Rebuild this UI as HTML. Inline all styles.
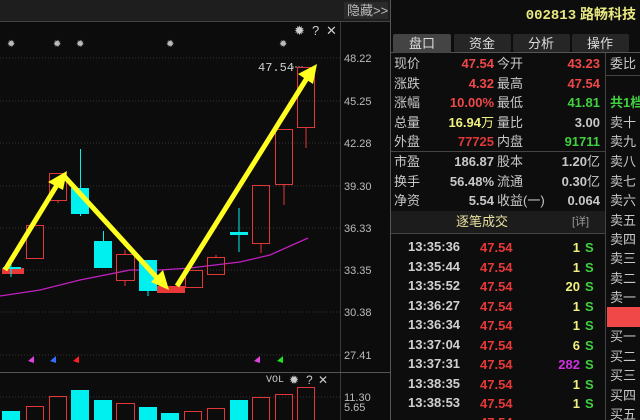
<!DOCTYPE html>
<html><head><meta charset="utf-8"><style>
html,body{margin:0;padding:0;background:#0c0c0c;width:640px;height:420px;overflow:hidden}
svg{display:block}
text{font-family:"Liberation Sans","Noto Sans CJK SC",sans-serif}
.m{font-family:"Liberation Mono","Noto Sans CJK SC",monospace}
</style></head><body>
<svg width="640" height="420" viewBox="0 0 640 420" xmlns="http://www.w3.org/2000/svg">
<rect width="640" height="420" fill="#0c0c0c"/>
<rect x="0" y="0" width="390" height="21" fill="#1e1e1e"/>
<line x1="0" y1="21.5" x2="390" y2="21.5" stroke="#444"/>
<rect x="344" y="2" width="44" height="17" fill="#2a2a2a"/>
<text x="347" y="15" font-size="13" fill="#bbb">隐藏&gt;&gt;</text>
<line x1="340.5" y1="22" x2="340.5" y2="420" stroke="#3a3a3a"/>
<line x1="390.5" y1="0" x2="390.5" y2="420" stroke="#555"/>
<line x1="0" y1="372.5" x2="390" y2="372.5" stroke="#555"/>
<g stroke="#333" stroke-dasharray="1,2">
<line x1="0" y1="58" x2="340" y2="58"/><line x1="0" y1="101" x2="340" y2="101"/>
<line x1="0" y1="143" x2="340" y2="143"/><line x1="0" y1="186" x2="340" y2="186"/>
<line x1="0" y1="228" x2="340" y2="228"/><line x1="0" y1="270" x2="340" y2="270"/>
<line x1="0" y1="312" x2="340" y2="312"/><line x1="0" y1="355" x2="340" y2="355"/>
<line x1="0" y1="397" x2="340" y2="397"/>
</g>
<g class="m" font-size="11" fill="#bbb">
<text x="344" y="62">48.22</text><text x="344" y="105">45.25</text>
<text x="344" y="147">42.28</text><text x="344" y="190">39.30</text>
<text x="344" y="232">36.33</text><text x="344" y="274">33.35</text>
<text x="344" y="316">30.38</text><text x="344" y="359">27.41</text>
<text x="344" y="401">11.30</text><text x="344" y="411">5.65</text>
</g>
<g fill="#ccc" font-size="13">
<text x="294" y="35">✹</text><text x="312" y="35">?</text><text x="326" y="35">✕</text>
<text x="266" y="382" font-size="10" class="m">VOL</text>
<text x="289" y="384" font-size="12">✹</text><text x="306" y="384" font-size="12">?</text><text x="318" y="384" font-size="12">✕</text>
</g>
<g fill="#bbb" font-size="10">
<text x="7" y="47">✹</text><text x="53" y="47">✹</text><text x="76" y="47">✹</text><text x="166" y="47">✹</text><text x="279" y="47">✹</text>
</g>
<text x="258" y="71" class="m" font-size="12" fill="#ccc">47.54</text>
<line x1="292" y1="67" x2="304" y2="67" stroke="#aaa" stroke-dasharray="2,1"/>
<polyline points="0,296 40,290 80,280 130,270 160,270 190,268 240,262 270,255 308,238" fill="none" stroke="#c020c0" stroke-width="1.3"/>
<g stroke="#e03838" fill="none">
<rect x="26.5" y="225.5" width="17" height="33"/>
<rect x="49.5" y="173.5" width="17" height="27"/><line x1="58" y1="200" x2="58" y2="203"/>
<rect x="116.5" y="254.5" width="18" height="26"/><line x1="125" y1="250" x2="125" y2="254"/><line x1="125" y1="280" x2="125" y2="286"/>
<rect x="185.5" y="270.5" width="17" height="17"/>
<rect x="207.5" y="257.5" width="17" height="17"/><line x1="216" y1="255" x2="216" y2="257"/>
<rect x="252.5" y="185.5" width="17" height="58"/><line x1="261" y1="243" x2="261" y2="253"/>
<rect x="275.5" y="129.5" width="17" height="55"/><line x1="284" y1="184" x2="284" y2="205"/>
<rect x="297.5" y="67.5" width="17" height="60"/><line x1="306" y1="127" x2="306" y2="148"/>
</g>
<g fill="#e83838">
<rect x="2" y="268" width="22" height="6"/><rect x="157" y="286" width="28" height="7"/>
</g>
<g fill="#00f0f0" stroke="#00f0f0">
<rect x="3" y="267" width="18" height="2" stroke="none"/>
<line x1="11" y1="259" x2="11" y2="277"/>
<rect x="71" y="188" width="18" height="26" stroke="none"/><line x1="80.5" y1="149" x2="80.5" y2="216"/>
<rect x="94" y="241" width="18" height="27" stroke="none"/><line x1="103.5" y1="231" x2="103.5" y2="241"/>
<rect x="139" y="260" width="18" height="31" stroke="none"/><line x1="148" y1="290" x2="148" y2="296"/>
<rect x="230" y="232" width="18" height="3" stroke="none"/><line x1="239" y1="208" x2="239" y2="252"/>
</g>
<g stroke="#ffff20" stroke-width="5" fill="#ffff20">
<line x1="5" y1="270" x2="57" y2="185"/>
<line x1="64" y1="176" x2="158" y2="279"/>
<line x1="177" y1="286" x2="307" y2="78"/>
</g>
<g fill="#ffff20">
<polygon points="67,171 48,182 63,190"/>
<polygon points="169,290 151,282 163,270"/>
<polygon points="317,64 298,74 313,84"/>
</g>
<polygon points="34,356 34,363 28,361" fill="#e040e0"/>
<polygon points="56,356 56,363 50,361" fill="#3070ff"/>
<polygon points="79,356 79,363 73,361" fill="#ff2020"/>
<polygon points="260,356 260,363 254,361" fill="#e040e0"/>
<polygon points="283,356 283,363 277,361" fill="#20e020"/>
<g fill="#00f0f0">
<rect x="2" y="411" width="18" height="9"/><rect x="71" y="390" width="18" height="30"/>
<rect x="94" y="400" width="18" height="20"/><rect x="139" y="407" width="18" height="13"/>
<rect x="161" y="413" width="18" height="7"/><rect x="230" y="400" width="18" height="20"/>
</g>
<g stroke="#e03838" fill="none">
<rect x="26.5" y="406.5" width="17" height="14"/><rect x="49.5" y="396.5" width="17" height="24"/>
<rect x="116.5" y="403.5" width="18" height="17"/><rect x="184.5" y="411.5" width="17" height="9"/>
<rect x="207.5" y="408.5" width="17" height="12"/><rect x="252.5" y="397.5" width="17" height="23"/>
<rect x="275.5" y="394.5" width="17" height="26"/><rect x="297.5" y="387.5" width="17" height="33"/>
</g>
<rect x="391" y="0" width="249" height="420" fill="#0d0d0d"/>
<text x="636" y="19" text-anchor="end" font-size="14" font-weight="bold" fill="#e8e880"><tspan class="m">002813</tspan> 路畅科技</text>
<line x1="391" y1="52.5" x2="640" y2="52.5" stroke="#555"/>
<rect x="393" y="34" width="58" height="19" rx="2" fill="#444"/>
<rect x="454" y="34" width="57" height="18" rx="2" fill="#262626"/>
<rect x="513" y="34" width="57" height="18" rx="2" fill="#262626"/>
<rect x="572" y="34" width="57" height="18" rx="2" fill="#262626"/>
<g font-size="13" fill="#ddd" text-anchor="middle">
<text x="422" y="48">盘口</text><text x="482" y="48">资金</text><text x="541" y="48">分析</text><text x="600" y="48">操作</text>
</g>
<line x1="605.5" y1="53" x2="605.5" y2="420" stroke="#444"/>
<line x1="391" y1="151.5" x2="605" y2="151.5" stroke="#444"/>
<g font-size="13" fill="#c8c8c8">
<text x="394" y="68">现价</text><text x="394" y="88">涨跌</text><text x="394" y="107">涨幅</text><text x="394" y="127">总量</text><text x="394" y="146">外盘</text>
<text x="394" y="166">市盈</text><text x="394" y="186">换手</text><text x="394" y="205">净资</text>
<text x="497" y="68">今开</text><text x="497" y="88">最高</text><text x="497" y="107">最低</text><text x="497" y="127">量比</text><text x="497" y="146">内盘</text>
<text x="497" y="166">股本</text><text x="497" y="186">流通</text><text x="497" y="205">收益(一)</text>
</g>
<g class="m" font-size="13" font-weight="bold" text-anchor="end">
<text x="494" y="68" fill="#f04848">47.54</text><text x="494" y="88" fill="#f04848">4.32</text>
<text x="494" y="107" fill="#f04848">10.00%</text><text x="494" y="127" fill="#f0f080">16.94<tspan font-weight="normal">万</tspan></text>
<text x="494" y="146" fill="#e03838">77725</text>
<text x="494" y="166" fill="#c8c8c8">186.87</text><text x="494" y="186" fill="#c8c8c8">56.48%</text><text x="494" y="205" fill="#c8c8c8">5.54</text>
<text x="600" y="68" fill="#f04848">43.23</text><text x="600" y="88" fill="#f04848">47.54</text>
<text x="600" y="107" fill="#40d040">41.81</text><text x="600" y="127" fill="#c8c8c8">3.00</text>
<text x="600" y="146" fill="#40d040">91711</text>
<text x="600" y="166" fill="#c8c8c8">1.20<tspan font-weight="normal">亿</tspan></text><text x="600" y="186" fill="#c8c8c8">0.30<tspan font-weight="normal">亿</tspan></text><text x="600" y="205" fill="#c8c8c8">0.064</text>
</g>
<g font-size="13" fill="#c8c8c8">
<text x="610" y="68">委比</text><text x="610" y="107" fill="#40d040" font-weight="bold">共1档</text>
<text x="610" y="127">卖十</text><text x="610" y="146">卖九</text><text x="610" y="166">卖八</text><text x="610" y="186">卖七</text><text x="610" y="205">卖六</text>
<text x="610" y="225">卖五</text><text x="610" y="244">卖四</text><text x="610" y="263">卖三</text><text x="610" y="283">卖二</text><text x="610" y="302">卖一</text>
<text x="610" y="341">买一</text><text x="610" y="361">买二</text><text x="610" y="380">买三</text><text x="610" y="400">买四</text><text x="610" y="419">买五</text>
</g>
<line x1="606" y1="75.5" x2="640" y2="75.5" stroke="#444"/>
<rect x="607" y="307" width="33" height="20" fill="#f04848"/>
<rect x="391" y="211" width="214" height="22" fill="#1c1c1c"/>
<line x1="391" y1="233.5" x2="605" y2="233.5" stroke="#444"/>
<text x="482" y="226" font-size="13" fill="#e8e0a0" text-anchor="middle">逐笔成交</text>
<text x="572" y="225" font-size="11" fill="#999">[详]</text>
<g class="m" font-size="13" font-weight="bold">
<g fill="#d0d0d0">
<text x="408" y="251">13:35:36</text><text x="408" y="271">13:35:44</text><text x="408" y="290">13:35:52</text>
<text x="408" y="310">13:36:27</text><text x="408" y="329">13:36:34</text><text x="408" y="349">13:37:04</text>
<text x="408" y="368">13:37:31</text><text x="408" y="388">13:38:35</text><text x="408" y="407">13:38:53</text>
</g>
<g fill="#e83838">
<text x="480" y="252">47.54</text><text x="480" y="272">47.54</text><text x="480" y="291">47.54</text>
<text x="480" y="311">47.54</text><text x="480" y="330">47.54</text><text x="480" y="350">47.54</text>
<text x="480" y="369">47.54</text><text x="480" y="389">47.54</text><text x="480" y="408">47.54</text><text x="480" y="427">47.54</text>
</g>
<g fill="#f0f080" text-anchor="end">
<text x="580" y="252">1</text><text x="580" y="272">1</text><text x="580" y="291">20</text>
<text x="580" y="311">1</text><text x="580" y="330">1</text><text x="580" y="350">6</text>
<text x="580" y="369" fill="#d030e0">282</text><text x="580" y="389">1</text><text x="580" y="408">1</text>
</g>
<g fill="#40d040">
<text x="585" y="252">S</text><text x="585" y="272">S</text><text x="585" y="291">S</text>
<text x="585" y="311">S</text><text x="585" y="330">S</text><text x="585" y="350">S</text>
<text x="585" y="369">S</text><text x="585" y="389">S</text><text x="585" y="408">S</text>
</g>
</g>
</svg>
</body></html>
